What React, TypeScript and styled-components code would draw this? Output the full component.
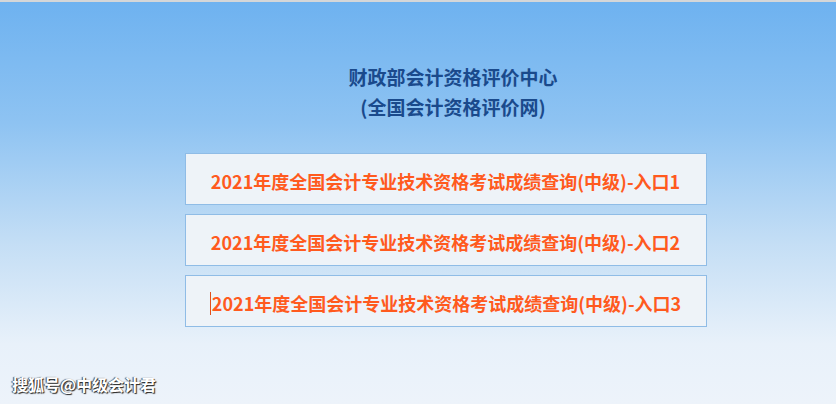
import React from 'react';
import styled, { createGlobalStyle } from 'styled-components';

const GlobalStyle = createGlobalStyle`
  html, body {
    margin: 0;
    padding: 0;
  }
  body {
    font-family: "Noto Sans CJK SC", "Noto Sans", sans-serif;
  }
`;

const Page = styled.div`
  width: 836px;
  height: 404px;
  box-sizing: border-box;
  border-top: 2px solid #d4d6d8;
  padding-left: 55px;
  background: linear-gradient(180deg, #6eb2f0 0%, #8ec3f2 30%, #c4def5 60%, #e8f1fa 85%, #edf3fa 100%);
  display: flex;
  flex-direction: column;
  align-items: center;
  position: relative;
  overflow: hidden;
`;

const Title = styled.h1`
  margin: 60px 0 0 15px;
  font-size: 19px;
  line-height: 30px;
  font-weight: 700;
  color: #1a4a8c;
  text-align: center;
`;

const EntryList = styled.div`
  margin: 31px 0 0 0;
  display: flex;
  flex-direction: column;
  gap: 9px;
`;

const Entry = styled.a`
  box-sizing: border-box;
  width: 522px;
  height: 52px;
  border: 1px solid #8fbce6;
  background: #eef3f8;
  display: flex;
  align-items: center;
  justify-content: center;
  padding-top: 4px;
  font-size: 18px;
  font-weight: 700;
  color: #ff5a1e;
  text-decoration: none;
  cursor: pointer;
  white-space: nowrap;
`;

const Caret = styled.span`
  display: inline-block;
  width: 1px;
  height: 23px;
  background: #e2501c;
  margin-right: 1px;
  vertical-align: middle;
`;

const Watermark = styled.div`
  position: absolute;
  left: 12px;
  bottom: 8px;
  font-size: 16px;
  font-weight: 700;
  color: #ffffff;
  text-shadow: 1px 1px 1px #222, -1px 0 1px #444;
`;

const entries = [1, 2, 3];

export default function App() {
  return (
    <>
      <GlobalStyle />
      <Page>
        <Title>
          财政部会计资格评价中心
          <br />
          (全国会计资格评价网)
        </Title>
        <EntryList>
          {entries.map((n) => (
            <Entry key={n}>
              {n === 3 && <Caret />}
              2021年度全国会计专业技术资格考试成绩查询(中级)-入口{n}
            </Entry>
          ))}
        </EntryList>
        <Watermark>搜狐号@中级会计君</Watermark>
      </Page>
    </>
  );
}
